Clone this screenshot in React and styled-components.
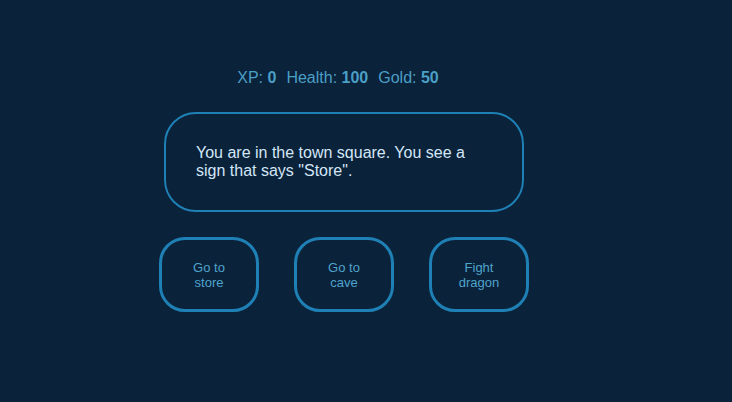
import React from "react";
import styled, { createGlobalStyle } from "styled-components";

const Global = createGlobalStyle`
  html, body { margin: 0; padding: 0; background: #0a223a; }
  body { font-family: "Liberation Sans", Arial, sans-serif; }
`;

const Page = styled.div`
  width: 688px;
  min-height: 402px;
  display: flex;
  flex-direction: column;
  align-items: center;
  padding-top: 68px;
  box-sizing: border-box;
`;

const Stats = styled.div`
  display: flex;
  gap: 10px;
  padding-right: 12px;
  font-size: 16px;
  line-height: 20px;
  color: #4a9fc6;
`;

const Stat = styled.span`
  b { font-weight: bold; }
`;

const Message = styled.div`
  margin-top: 24px;
  width: 360px;
  height: 100px;
  box-sizing: border-box;
  border: 2px solid #1f80b6;
  border-radius: 32px;
  padding: 30px 30px 0 30px;
  font-size: 16px;
  line-height: 18px;
  color: #d3e7f7;
`;

const Buttons = styled.div`
  margin-top: 25px;
  display: flex;
  gap: 35px;
`;

const Button = styled.button`
  width: 100px;
  height: 75px;
  box-sizing: border-box;
  border: 3px solid #1f80b6;
  border-radius: 26px;
  background: transparent;
  color: #4fa4cc;
  font-family: "Liberation Sans", Arial, sans-serif;
  font-size: 13px;
  line-height: 15px;
  padding: 0 20px;
  cursor: pointer;
`;

export default function App() {
  return (
    <>
      <Global />
      <Page>
        <Stats>
          <Stat>XP: <b>0</b></Stat>
          <Stat>Health: <b>100</b></Stat>
          <Stat>Gold: <b>50</b></Stat>
        </Stats>
        <Message>You are in the town square. You see a sign that says "Store".</Message>
        <Buttons>
          <Button>Go to store</Button>
          <Button>Go to cave</Button>
          <Button>Fight dragon</Button>
        </Buttons>
      </Page>
    </>
  );
}
